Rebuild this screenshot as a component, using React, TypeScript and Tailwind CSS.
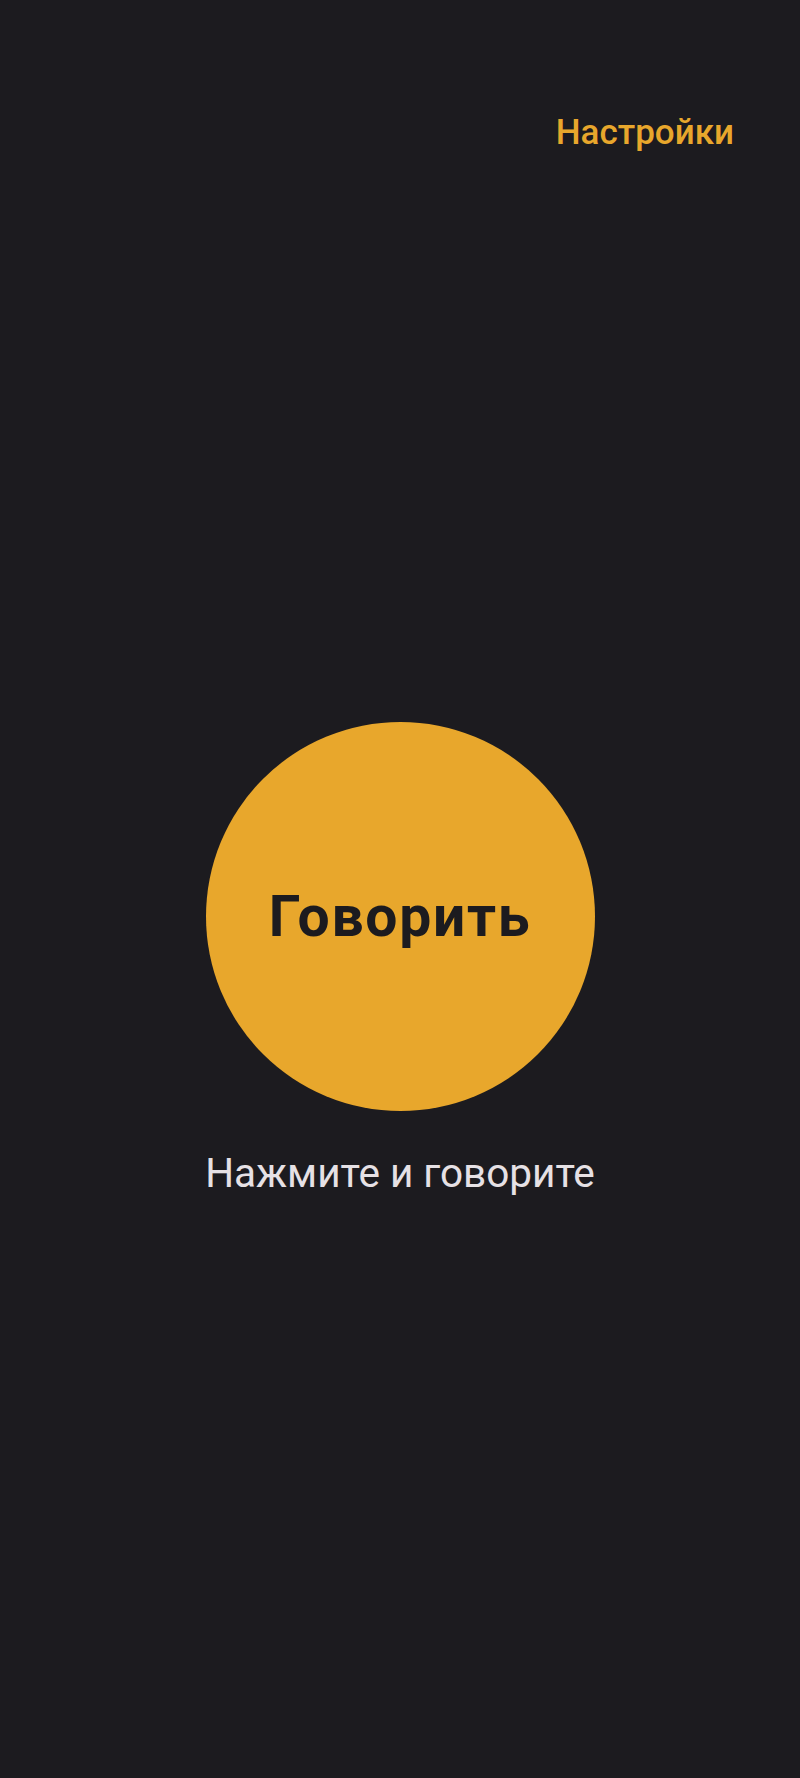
export default function App() {
  return (
    <div className="min-h-screen flex flex-col bg-[#1c1b1f] font-['Roboto',sans-serif]">
      <header className="flex justify-end pt-[109px] pr-[66px]">
        <button className="text-[35px] leading-[48px] font-medium text-[#e8a72c]">
          Настройки
        </button>
      </header>

      <main className="flex flex-col items-center pt-[565px]">
        <button className="w-[389px] h-[389px] rounded-full bg-[#e8a72c] flex items-center justify-center">
          <span className="text-[57px] font-bold tracking-[0.03em] text-[#1c1b1f]">Говорить</span>
        </button>
        <p className="mt-[38px] text-[40.5px] leading-[48px] text-[#e6e1e5]">
          Нажмите и говорите
        </p>
      </main>
    </div>
  );
}
